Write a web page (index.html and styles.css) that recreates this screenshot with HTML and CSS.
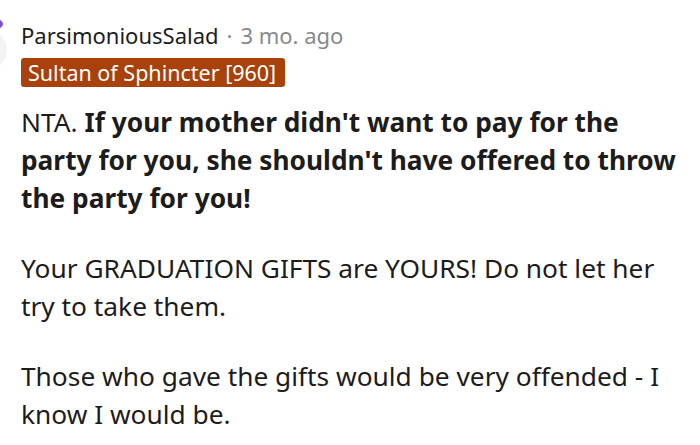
FILE: index.html
```html
<!DOCTYPE html>
<html>
<head>
<meta charset="utf-8">
<link rel="stylesheet" href="styles.css">
</head>
<body>
<div class="comment">
  <div class="avatar-col">
    <svg class="avatar" width="40" height="56" viewBox="0 0 40 56">
      <circle cx="20" cy="36" r="19" fill="#f3f3f6"/>
      <ellipse cx="29" cy="10" rx="6" ry="4.5" fill="#7a4fd0"/>
    </svg>
  </div>
  <div class="content">
    <div class="meta"><span class="user">ParsimoniousSalad</span><span class="dot">·</span><span class="time">3 mo. ago</span></div>
    <div class="flair-row"><span class="flair">Sultan of Sphincter [960]</span></div>
    <div class="body">
      <p>NTA. <strong>If your mother didn't want to pay for the party for you, she shouldn't have offered to throw the party for you!</strong></p>
      <p>Your GRADUATION GIFTS are YOURS! Do not let her try to take them.</p>
      <p>Those who gave the gifts would be very offended - I know I would be.</p>
    </div>
  </div>
</div>
</body>
</html>
```
FILE: styles.css
```css
html, body {
  margin: 0;
  padding: 0;
  background: #ffffff;
}
body {
  font-family: "Noto Sans", "Open Sans", sans-serif;
  color: #1c1c1c;
  overflow: hidden;
}
.comment {
  display: flex;
  align-items: flex-start;
  width: 700px;
}
.avatar-col {
  width: 8px;
  flex: 0 0 8px;
  overflow: hidden;
  padding-top: 14px;
}
.avatar {
  display: block;
  margin-left: -32px;
}
.content {
  flex: 1;
  padding-left: 13px;
  padding-top: 20px;
  min-width: 0;
}
.meta {
  font-size: 22px;
  line-height: 30px;
  white-space: nowrap;
}
.user {
  color: #1c1c1c;
}
.dot {
  color: #878a8c;
  margin: 0 8px;
}
.time {
  color: #878a8c;
}
.flair-row {
  margin-top: 8px;
  display: flex;
}
.flair {
  display: inline-block;
  background: #a8410a;
  color: #ffffff;
  font-size: 21.5px;
  line-height: 28px;
  padding: 1px 9px 0 7px;
  border-radius: 3px;
  white-space: nowrap;
}
.body {
  margin-top: 16px;
  font-size: 26.3px;
  line-height: 38px;
  width: 660px;
}
.body p {
  margin: 0 0 32px;
}
.body strong {
  font-weight: 700;
}
```
